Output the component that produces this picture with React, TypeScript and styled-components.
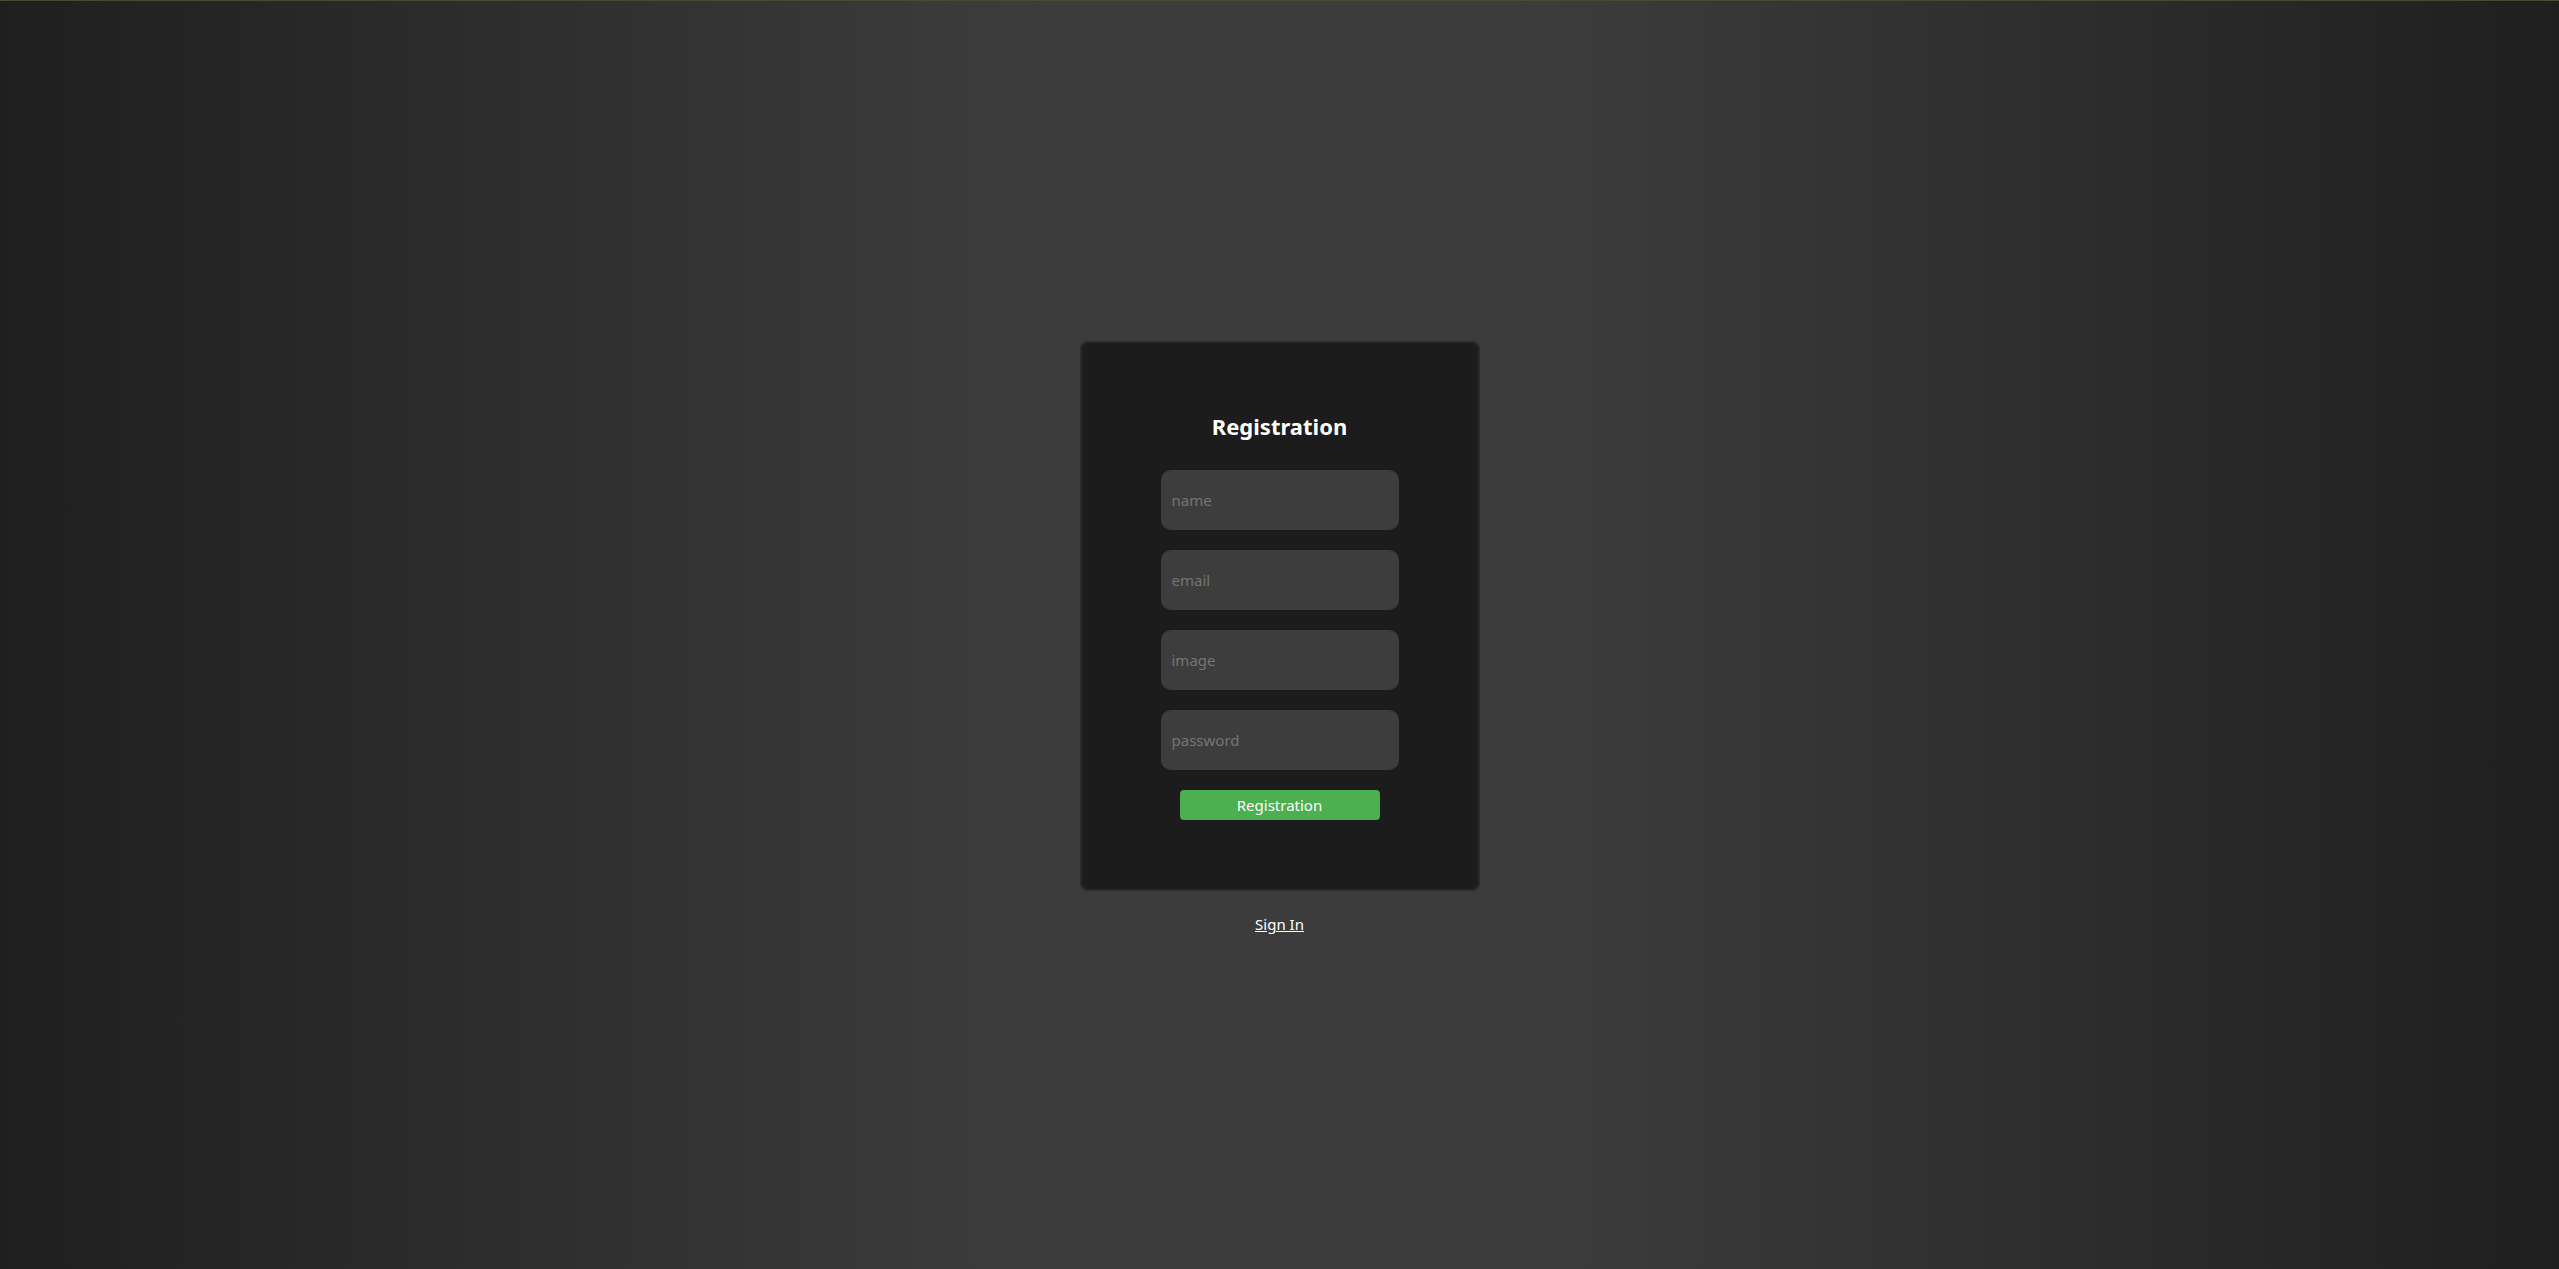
import React from "react";
import styled, { createGlobalStyle } from "styled-components";

const GlobalStyle = createGlobalStyle`
  html, body {
    margin: 0;
    padding: 0;
  }
  body {
    font-family: "Noto Sans", "Open Sans", "DejaVu Sans", sans-serif;
    background: linear-gradient(90deg, #1f1f1f 0%, #3b3b3b 38%, #3c3c3c 50%, #3b3b3b 62%, #1f1f1f 100%);
    min-height: 100vh;
  }
`;

const Page = styled.div`
  min-height: 100vh;
  box-sizing: border-box;
  border-top: 1px solid #464b38;
  display: flex;
  flex-direction: column;
  align-items: center;
  padding-top: 340px;
`;

const Card = styled.form`
  width: 400px;
  height: 550px;
  box-sizing: border-box;
  background: #1c1c1c;
  border: 2px solid #2a2a2a;
  border-radius: 8px;
  display: flex;
  flex-direction: column;
  align-items: center;
  padding-top: 67px;
`;

const Title = styled.h2`
  margin: 0 0 28px;
  color: #ffffff;
  font-size: 22px;
  font-weight: 700;
  line-height: 32px;
`;

const Fields = styled.div`
  display: flex;
  flex-direction: column;
  gap: 20px;
  width: 238px;
`;

const Input = styled.input`
  height: 60px;
  box-sizing: border-box;
  width: 100%;
  background: #3d3d3d;
  border: none;
  border-radius: 10px;
  padding: 0 11px;
  font-family: inherit;
  font-size: 15px;
  color: #ddd;
  outline: none;
  &::placeholder {
    color: #757575;
  }
`;

const Button = styled.button`
  margin-top: 20px;
  width: 200px;
  height: 30px;
  background: #4caf50;
  color: #ffffff;
  border: none;
  border-radius: 4px;
  font-family: inherit;
  font-size: 15px;
  cursor: pointer;
  padding: 0;
`;

const SignIn = styled.a`
  margin-top: 22px;
  color: #ffffff;
  font-size: 15px;
  line-height: 22px;
  text-decoration: underline;
  cursor: pointer;
`;

export default function App() {
  return (
    <>
      <GlobalStyle />
      <Page>
        <Card onSubmit={(e) => e.preventDefault()}>
          <Title>Registration</Title>
          <Fields>
            <Input placeholder="name" />
            <Input placeholder="email" />
            <Input placeholder="image" />
            <Input placeholder="password" type="password" />
          </Fields>
          <Button type="submit">Registration</Button>
        </Card>
        <SignIn href="#">Sign In</SignIn>
      </Page>
    </>
  );
}
